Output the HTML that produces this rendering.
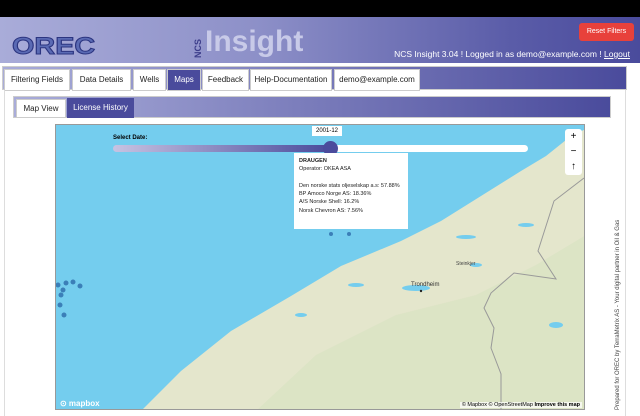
<!DOCTYPE html>
<html><head><meta charset="utf-8"><style>
*{box-sizing:border-box;margin:0;padding:0}
body{width:640px;height:416px;overflow:hidden;background:#fff;font-family:"Liberation Sans",Arial,sans-serif;position:relative}
.top{position:absolute;left:0;top:0;width:640px;height:17px;background:#000}
.hdr{position:absolute;left:0;top:17px;width:640px;height:46px;background:linear-gradient(90deg,#a9acd9 0%,#8d90c8 40%,#5a5ca8 80%,#4a4b9c 100%)}
.orec{position:absolute;left:12px;top:33px;font:900 24px "Liberation Sans";color:#5a6ab4;letter-spacing:0px;-webkit-text-stroke:1px #2c3580;transform:scaleX(1.2);transform-origin:left}
.ncs{position:absolute;font:bold 9px "Liberation Sans";color:#3c3d8a;transform:rotate(-90deg);transform-origin:left top;top:58px;left:193px}
.ins{position:absolute;left:205px;top:25px;font:bold 30px "Liberation Sans";color:#c8cae8}
.reset{position:absolute;left:579px;top:23px;width:55px;height:18px;background:#e8413b;border-radius:3px;color:#fff;font-size:7px;text-align:center;line-height:18px}
.login{position:absolute;right:10px;top:49px;font-size:8.5px;color:#fff}
.tabs{position:absolute;left:2px;top:66px;width:625px;height:24px;background:linear-gradient(90deg,#a9acd9,#4a4b9c);border:1px solid #ccc}
.tab{position:absolute;top:2px;height:22px;background:#fff;border:1px solid #ccc;font-size:8px;line-height:20px;text-align:center;color:#222}
.panel{position:absolute;left:4px;top:90px;width:622px;height:326px;border-left:1px solid #ddd;border-right:1px solid #ddd}
.sub{position:absolute;left:13px;top:96px;width:598px;height:22px;background:linear-gradient(90deg,#a9acd9,#4a4b9c);border:1px solid #ccc}
.map{position:absolute;left:55px;top:124px;width:530px;height:286px;background:#74cdee;overflow:hidden;border:1px solid #999}
.side{position:absolute;left:615px;top:410px;transform:rotate(-90deg);transform-origin:left top;font-size:6px;color:#444;white-space:nowrap}
</style></head><body>
<div class="top"></div>
<div class="hdr"></div>
<div class="orec">OREC</div>
<div class="ncs">NCS</div>
<div class="ins">Insight</div>
<div class="reset">Reset Filters</div>
<div class="login">NCS Insight 3.04 ! Logged in as demo@example.com ! <u>Logout</u></div>
<div class="tabs">
<div class="tab" style="left:1px;width:66px">Filtering Fields</div>
<div class="tab" style="left:69px;width:59px">Data Details</div>
<div class="tab" style="left:130px;width:33px">Wells</div>
<div class="tab" style="left:164px;width:34px;background:#4a4b9c;color:#fff">Maps</div>
<div class="tab" style="left:199px;width:47px">Feedback</div>
<div class="tab" style="left:247px;width:82px">Help-Documentation</div>
<div class="tab" style="left:331px;width:86px">demo@example.com</div>
</div>
<div class="panel"></div>
<div class="sub">
<div class="tab" style="left:2px;top:2px;height:19px;width:50px;line-height:17px">Map View</div>
<div class="tab" style="left:53px;top:1px;height:20px;width:67px;line-height:18px;background:#4a4b9c;color:#fff;border-color:#4a4b9c">License History</div>
</div>
<div class="map">
<svg width="530" height="286" style="position:absolute;left:0;top:0">
<polygon fill="#e4e6cc" points="85,286 125,246 175,206 235,171 285,141 345,116 385,96 425,71 465,46 490,31 515,11 530,4 530,286"/>
<polygon fill="#d9e3c2" points="200,286 260,230 340,190 420,170 480,140 530,110 530,286" opacity=".7"/>
<g fill="#74cdee"><ellipse cx="360" cy="163" rx="14" ry="3"/><ellipse cx="410" cy="112" rx="10" ry="2"/><ellipse cx="470" cy="100" rx="8" ry="2"/><ellipse cx="420" cy="140" rx="6" ry="2"/><ellipse cx="500" cy="200" rx="7" ry="3"/><ellipse cx="300" cy="160" rx="8" ry="2"/><ellipse cx="245" cy="190" rx="6" ry="2"/></g>
<polyline fill="none" stroke="#999" stroke-width="1" points="528,53 498,76 482,126 500,154 458,148 435,168 428,183 438,203 435,223 445,249 445,286"/>
<circle cx="275" cy="109" r="2" fill="#3b7fb8"/><circle cx="293" cy="109" r="2" fill="#3b7fb8"/>
<circle cx="2" cy="160" r="2.5" fill="#3b7fb8"/><circle cx="10" cy="158" r="2.5" fill="#3b7fb8"/><circle cx="17" cy="157" r="2.5" fill="#3b7fb8"/><circle cx="7" cy="165" r="2.5" fill="#3b7fb8"/><circle cx="24" cy="161" r="2.5" fill="#3b7fb8"/><circle cx="5" cy="170" r="2.5" fill="#3b7fb8"/><circle cx="4" cy="180" r="2.5" fill="#3b7fb8"/><circle cx="8" cy="190" r="2.5" fill="#3b7fb8"/>
<text x="355" y="161" font-size="6" fill="#333" font-family="Liberation Sans">Trondheim</text>
<circle cx="365" cy="166" r="1.2" fill="#222"/>
<text x="400" y="140" font-size="5" fill="#444" font-family="Liberation Sans">Steinkjer</text>
</svg>
<div style="position:absolute;left:57px;top:10px;font-size:6px;font-weight:bold">Select Date:</div>
<div style="position:absolute;left:57px;top:20px;width:415px;height:7px;border-radius:4px;background:linear-gradient(90deg,#c7c3e2 0%,#4a4b9c 52%,#fff 52%)"></div>
<div style="position:absolute;left:267px;top:16px;width:15px;height:15px;border-radius:50%;background:#4a4b9c"></div>
<div style="position:absolute;left:256px;top:1px;background:#fff;font-size:6px;padding:2px 4px">2001-12</div>
<div style="position:absolute;left:238px;top:28px;width:114px;height:76px;background:#fff;font-size:5.5px;padding:4px 5px;line-height:8.3px;color:#222;white-space:nowrap"><b>DRAUGEN</b><br>Operator: OKEA ASA<br><br>Den norske stats oljeselskap a.s: 57.88%<br>BP Amoco Norge AS: 18.36%<br>A/S Norske Shell: 16.2%<br>Norsk Chevron AS: 7.56%</div>
<div style="position:absolute;left:509px;top:4px;width:17px;height:46px;background:#fff;border-radius:3px;font-size:10px;text-align:center;line-height:15px">+<br>−<br>↑</div>
<div style="position:absolute;left:4px;top:274px;font-size:8px;color:#fff;font-weight:bold">⊙ mapbox</div>
<div style="position:absolute;right:2px;top:277px;font-size:5.5px;background:rgba(255,255,255,.7);padding:0 2px">© Mapbox © OpenStreetMap <b>Improve this map</b></div>
</div>
<div class="side">Prepared for OREC by TerraMetrix AS - Your digital partner in Oil &amp; Gas</div>
</body></html>
